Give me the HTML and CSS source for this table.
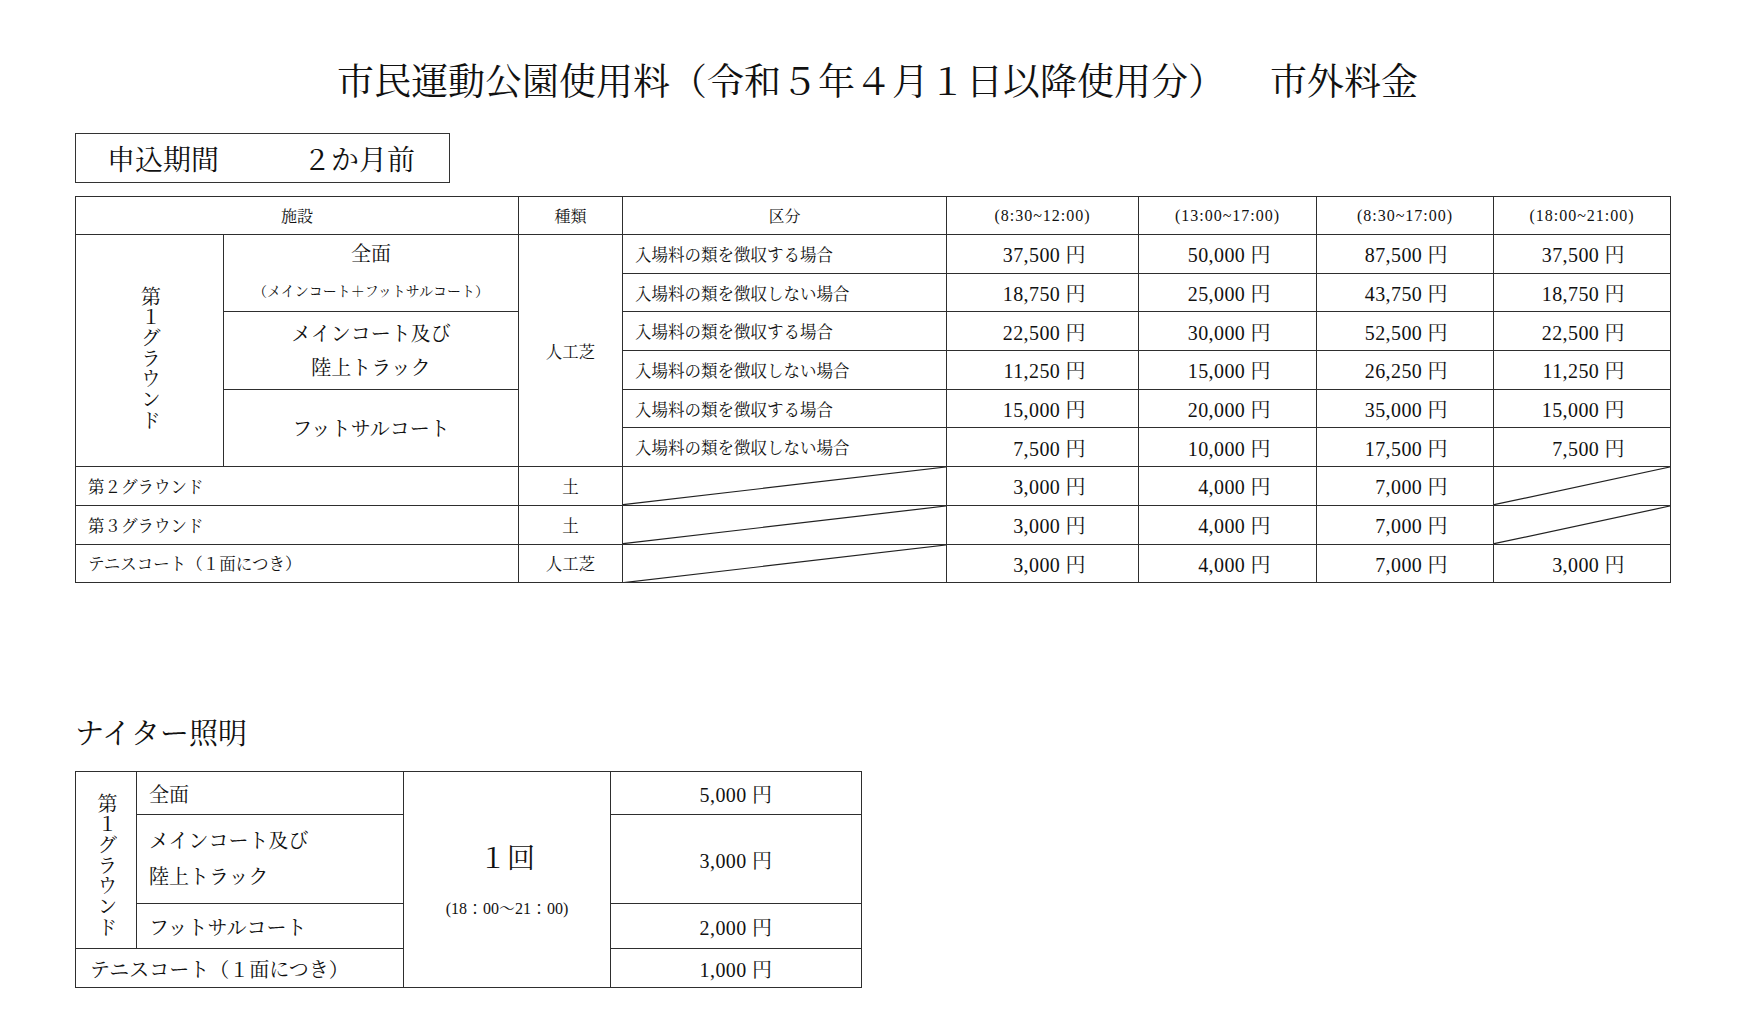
FILE: index.html
```html
<!DOCTYPE html>
<html lang="ja">
<head>
<meta charset="utf-8">
<title>市民運動公園使用料 市外料金</title>
<link rel="stylesheet" href="styles.css">
</head>
<body>
<div class="page">
  <h1 class="title">市民運動公園使用料（令和５年４月１日以降使用分）<span class="title-sub">市外料金</span></h1>
  <div class="content">
    <div class="period"><span class="period-label">申込期間</span><span class="period-value">２か月前</span></div>

    <table class="fees">
      <colgroup>
        <col class="c-fac1"><col class="c-fac2"><col class="c-type"><col class="c-kubun">
        <col class="c-t1"><col class="c-t2"><col class="c-t3"><col class="c-t4">
      </colgroup>
      <thead>
        <tr class="head">
          <th colspan="2">施設</th>
          <th>種類</th>
          <th>区分</th>
          <th class="time">(8:30~12:00)</th>
          <th class="time">(13:00~17:00)</th>
          <th class="time">(8:30~17:00)</th>
          <th class="time">(18:00~21:00)</th>
        </tr>
      </thead>
      <tbody>
        <tr>
          <td rowspan="6" class="vert vert-main"><span class="vtext">第１グラウンド</span></td>
          <td rowspan="2" class="sub">
            <div class="full">全面</div>
            <div class="full-note">（メインコート＋フットサルコート）</div>
          </td>
          <td rowspan="6" class="type">人工芝</td>
          <td class="kubun">入場料の類を徴収する場合</td>
          <td class="amt a1">37,500 円</td>
          <td class="amt">50,000 円</td>
          <td class="amt">87,500 円</td>
          <td class="amt">37,500 円</td>
        </tr>
        <tr>
          <td class="kubun">入場料の類を徴収しない場合</td>
          <td class="amt a1">18,750 円</td>
          <td class="amt">25,000 円</td>
          <td class="amt">43,750 円</td>
          <td class="amt">18,750 円</td>
        </tr>
        <tr>
          <td rowspan="2" class="sub sub-two">
            <div>メインコート及び</div>
            <div>陸上トラック</div>
          </td>
          <td class="kubun">入場料の類を徴収する場合</td>
          <td class="amt a1">22,500 円</td>
          <td class="amt">30,000 円</td>
          <td class="amt">52,500 円</td>
          <td class="amt">22,500 円</td>
        </tr>
        <tr>
          <td class="kubun">入場料の類を徴収しない場合</td>
          <td class="amt a1">11,250 円</td>
          <td class="amt">15,000 円</td>
          <td class="amt">26,250 円</td>
          <td class="amt">11,250 円</td>
        </tr>
        <tr>
          <td rowspan="2" class="sub">フットサルコート</td>
          <td class="kubun">入場料の類を徴収する場合</td>
          <td class="amt a1">15,000 円</td>
          <td class="amt">20,000 円</td>
          <td class="amt">35,000 円</td>
          <td class="amt">15,000 円</td>
        </tr>
        <tr>
          <td class="kubun">入場料の類を徴収しない場合</td>
          <td class="amt a1">7,500 円</td>
          <td class="amt">10,000 円</td>
          <td class="amt">17,500 円</td>
          <td class="amt">7,500 円</td>
        </tr>
        <tr>
          <td colspan="2" class="name">第２グラウンド</td>
          <td class="type">土</td>
          <td class="slash"><svg class="diag" viewBox="0 0 100 100" preserveAspectRatio="none"><line x1="0" y1="100" x2="100" y2="0"/></svg></td>
          <td class="amt a1">3,000 円</td>
          <td class="amt">4,000 円</td>
          <td class="amt">7,000 円</td>
          <td class="slash"><svg class="diag" viewBox="0 0 100 100" preserveAspectRatio="none"><line x1="0" y1="100" x2="100" y2="0"/></svg></td>
        </tr>
        <tr>
          <td colspan="2" class="name">第３グラウンド</td>
          <td class="type">土</td>
          <td class="slash"><svg class="diag" viewBox="0 0 100 100" preserveAspectRatio="none"><line x1="0" y1="100" x2="100" y2="0"/></svg></td>
          <td class="amt a1">3,000 円</td>
          <td class="amt">4,000 円</td>
          <td class="amt">7,000 円</td>
          <td class="slash"><svg class="diag" viewBox="0 0 100 100" preserveAspectRatio="none"><line x1="0" y1="100" x2="100" y2="0"/></svg></td>
        </tr>
        <tr>
          <td colspan="2" class="name">テニスコート（１面につき）</td>
          <td class="type">人工芝</td>
          <td class="slash"><svg class="diag" viewBox="0 0 100 100" preserveAspectRatio="none"><line x1="0" y1="100" x2="100" y2="0"/></svg></td>
          <td class="amt a1">3,000 円</td>
          <td class="amt">4,000 円</td>
          <td class="amt">7,000 円</td>
          <td class="amt">3,000 円</td>
        </tr>
      </tbody>
    </table>

    <h2 class="night-title">ナイター照明</h2>

    <table class="night">
      <colgroup>
        <col class="n-a"><col class="n-b"><col class="n-c"><col class="n-d">
      </colgroup>
      <tbody>
        <tr class="n-r1">
          <td rowspan="3" class="vert vert-night"><span class="vtext">第１グラウンド</span></td>
          <td class="n-name">全面</td>
          <td rowspan="4" class="n-once">
            <div class="once">１回</div>
            <div class="once-time">(18：00～21：00)</div>
          </td>
          <td class="n-amt">5,000 円</td>
        </tr>
        <tr class="n-r2">
          <td class="n-name n-two">
            <div>メインコート及び</div>
            <div>陸上トラック</div>
          </td>
          <td class="n-amt">3,000 円</td>
        </tr>
        <tr class="n-r3">
          <td class="n-name">フットサルコート</td>
          <td class="n-amt">2,000 円</td>
        </tr>
        <tr class="n-r4">
          <td colspan="2" class="n-name n-tennis">テニスコート（１面につき）</td>
          <td class="n-amt">1,000 円</td>
        </tr>
      </tbody>
    </table>
  </div>
</div>
</body>
</html>
```
FILE: styles.css
```css
* { box-sizing: border-box; }

html, body {
  margin: 0;
  padding: 0;
  background: #ffffff;
}

body {
  font-family: "Liberation Serif", "Noto Serif CJK JP", "Noto Sans CJK JP", serif;
  color: #111111;
}

.page {
  width: 1755px;
}

.title {
  margin: 62px 0 0;
  height: 42px;
  line-height: 42px;
  font-size: 37px;
  font-weight: normal;
  text-align: center;
  white-space: nowrap;
}

.title-sub {
  margin-left: 45px;
}

.content {
  padding-left: 75px;
}

.period {
  margin-top: 29px;
  width: 375px;
  height: 50px;
  border: 1px solid #333333;
  display: flex;
  align-items: center;
  padding-left: 31px;
  font-size: 28px;
}

.period-value {
  margin-left: 84px;
}

/* main fee table */
.fees {
  margin-top: 13px;
  width: 1595px;
  border-collapse: collapse;
  table-layout: fixed;
}

.c-fac1 { width: 148px; }
.c-fac2 { width: 295px; }
.c-type { width: 104px; }
.c-kubun { width: 324px; }
.c-t1 { width: 192px; }
.c-t2 { width: 178px; }
.c-t3 { width: 177px; }
.c-t4 { width: 177px; }

.fees th,
.fees td,
.night td {
  border: 1px solid #2e2e2e;
  padding: 0;
  font-weight: normal;
  vertical-align: middle;
}

.fees .head {
  height: 38px;
}

.fees th {
  font-size: 16px;
  text-align: center;
}

.fees th.time {
  letter-spacing: 1px;
}

.fees tbody tr {
  height: 38.7px;
}

.vert {
  text-align: center;
}

.vtext {
  display: inline-block;
  writing-mode: vertical-rl;
  text-orientation: upright;
  font-size: 20px;
  letter-spacing: 0.7px;
  line-height: 1;
}

.vert-main .vtext {
  margin-top: 20px;
}

.vert-night .vtext {
  margin-top: 14px;
}

.sub {
  text-align: center;
  font-size: 20px;
}

.full {
  line-height: 38px;
  font-size: 20px;
}

.full-note {
  line-height: 38px;
  font-size: 14px;
}

.sub-two div {
  line-height: 34px;
}

.type {
  text-align: center;
  font-size: 16.5px;
}

.kubun {
  padding-left: 12px !important;
  font-size: 16.5px;
}

.name {
  padding-left: 12px !important;
  font-size: 16.5px;
}

.amt {
  text-align: right;
  padding-right: 45px !important;
  font-size: 20px;
  letter-spacing: 0.4px;
}

.amt.a1 {
  padding-right: 52px !important;
}

.slash {
  position: relative;
}

.diag {
  position: absolute;
  left: 0;
  top: 0;
  width: 100%;
  height: 100%;
  display: block;
}

.diag line {
  stroke: #222222;
  stroke-width: 1.2px;
  vector-effect: non-scaling-stroke;
}

/* night lighting */
.night-title {
  margin: 131px 0 0;
  height: 40px;
  line-height: 40px;
  font-size: 29px;
  font-weight: normal;
}

.night {
  margin-top: 17px;
  width: 786px;
  border-collapse: collapse;
  table-layout: fixed;
}

.n-a { width: 61px; }
.n-b { width: 267px; }
.n-c { width: 207px; }
.n-d { width: 251px; }

.n-r1 { height: 43px; }
.n-r2 { height: 89px; }
.n-r3 { height: 45px; }
.n-r4 { height: 39px; }

.n-name {
  padding-left: 12px !important;
  font-size: 20px;
}

.n-two div {
  line-height: 36px;
}

.n-tennis {
  padding-left: 14px !important;
}

.n-once {
  text-align: center;
}

.once {
  font-size: 28px;
  line-height: 36px;
}

.once-time {
  margin-top: 22px;
  font-size: 16px;
  line-height: 20px;
}

.n-amt {
  text-align: center;
  font-size: 20px;
  letter-spacing: 0.4px;
}
```
